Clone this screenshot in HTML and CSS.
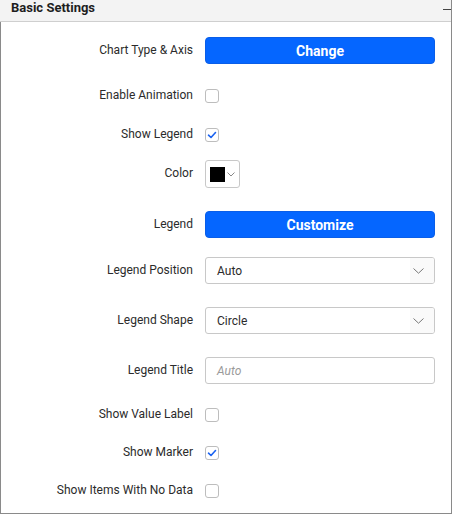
FILE: index.html
```html
<!DOCTYPE html>
<html>
<head>
<meta charset="utf-8">
<link rel="stylesheet" href="styles.css">
</head>
<body>
<div class="panel">
  <div class="header">
    <span class="title">Basic Settings</span>
    <span class="collapse"></span>
  </div>
  <div class="body">
    <div class="row r-btn1">
      <div class="label">Chart Type &amp; Axis</div>
      <div class="control"><button class="btn">Change</button></div>
    </div>
    <div class="row r-chk-a">
      <div class="label">Enable Animation</div>
      <div class="control"><span class="check"></span></div>
    </div>
    <div class="row r-chk">
      <div class="label">Show Legend</div>
      <div class="control"><span class="check on"><svg viewBox="0 0 14 14" width="14" height="14"><polyline points="3.5,7.2 6,9.5 10.5,4.5" fill="none" stroke="#1a62f0" stroke-width="1.6" stroke-linecap="round" stroke-linejoin="round"/></svg></span></div>
    </div>
    <div class="row r-color">
      <div class="label">Color</div>
      <div class="control">
        <div class="picker"><span class="swatch"></span><svg class="pchev" viewBox="0 0 8 5" width="8" height="5"><polyline points="0.5,0.5 4,4 7.5,0.5" fill="none" stroke="#888" stroke-width="1"/></svg></div>
      </div>
    </div>
    <div class="row r-btn2">
      <div class="label">Legend</div>
      <div class="control"><button class="btn">Customize</button></div>
    </div>
    <div class="row r-dd1">
      <div class="label">Legend Position</div>
      <div class="control"><div class="dropdown"><span class="val">Auto</span><span class="arrow"><svg viewBox="0 0 11 6" width="11" height="6"><polyline points="0.5,0.5 5.5,5.2 10.5,0.5" fill="none" stroke="#777" stroke-width="1"/></svg></span></div></div>
    </div>
    <div class="row r-dd">
      <div class="label">Legend Shape</div>
      <div class="control"><div class="dropdown"><span class="val">Circle</span><span class="arrow"><svg viewBox="0 0 11 6" width="11" height="6"><polyline points="0.5,0.5 5.5,5.2 10.5,0.5" fill="none" stroke="#777" stroke-width="1"/></svg></span></div></div>
    </div>
    <div class="row r-dd">
      <div class="label">Legend Title</div>
      <div class="control"><div class="textbox"><span class="ph">Auto</span></div></div>
    </div>
    <div class="row r-chk2">
      <div class="label">Show Value Label</div>
      <div class="control"><span class="check"></span></div>
    </div>
    <div class="row r-chk3">
      <div class="label">Show Marker</div>
      <div class="control"><span class="check on"><svg viewBox="0 0 14 14" width="14" height="14"><polyline points="3.5,7.2 6,9.5 10.5,4.5" fill="none" stroke="#1a62f0" stroke-width="1.6" stroke-linecap="round" stroke-linejoin="round"/></svg></span></div>
    </div>
    <div class="row r-chk3">
      <div class="label">Show Items With No Data</div>
      <div class="control"><span class="check"></span></div>
    </div>
  </div>
</div>
</body>
</html>
```
FILE: styles.css
```css
html, body {
  margin: 0;
  padding: 0;
  background: #ffffff;
}
.panel {
  width: 452px;
  height: 514px;
  box-sizing: border-box;
  border-right: 1px solid #8a8a8a;
  display: flex;
  flex-direction: column;
  font-family: Roboto, "Liberation Sans", sans-serif;
}
.header {
  height: 22px;
  box-sizing: border-box;
  background: #f3f3f3;
  border-bottom: 1px solid #cfcfcf;
  display: flex;
  align-items: flex-start;
  justify-content: space-between;
  padding-left: 11px;
}
.title {
  font-size: 13px;
  font-weight: bold;
  color: #1e1e1e;
  line-height: 16px;
}
.collapse {
  width: 8px;
  height: 1px;
  background: #444;
  margin-top: 9px;
}
.body {
  flex: 1;
  border-left: 1px solid #8a8a8a;
  border-bottom: 1px solid #8a8a8a;
  display: flex;
  flex-direction: column;
  padding-top: 15px;
}
.row {
  display: grid;
  grid-template-columns: 192px 230px;
  column-gap: 12px;
  align-items: center;
}
.r-btn1 { height: 27px; }
.r-chk-a { margin-top: 24px; height: 16px; }
.r-chk { margin-top: 23px; height: 16px; }
.r-color { margin-top: 17px; height: 28px; }
.r-btn2 { margin-top: 23px; height: 27px; }
.r-dd1 { margin-top: 19px; height: 27px; }
.r-dd { margin-top: 23px; height: 27px; }
.r-chk2 { margin-top: 23px; height: 16px; }
.r-chk3 { margin-top: 22px; height: 16px; }
.label {
  text-align: right;
  font-size: 12px;
  color: #2b2b2b;
  line-height: 14px;
  margin-top: -2px;
}
.control {
  display: flex;
  align-items: center;
}
.btn {
  width: 230px;
  height: 27px;
  margin: 0;
  padding: 0;
  border: 1px solid #0a5ee8;
  border-radius: 4px;
  background: #0566ff;
  color: #ffffff;
  font-family: Roboto, "Liberation Sans", sans-serif;
  font-size: 14px;
  font-weight: bold;
}
.check {
  width: 14px;
  height: 14px;
  box-sizing: border-box;
  border: 1px solid #bdbdbd;
  border-radius: 3px;
  background: #fff;
  display: flex;
  align-items: center;
  justify-content: center;
}
.check svg {
  display: block;
  margin: -1px;
}
.picker {
  width: 35px;
  height: 28px;
  box-sizing: border-box;
  border: 1px solid #c8c8c8;
  border-radius: 3px;
  display: flex;
  align-items: center;
  padding-left: 4px;
  gap: 2px;
}
.swatch {
  width: 15px;
  height: 15px;
  background: #000;
  display: block;
}
.pchev {
  display: block;
}
.dropdown, .textbox {
  width: 230px;
  height: 27px;
  box-sizing: border-box;
  border: 1px solid #c8c8c8;
  border-radius: 3px;
  display: flex;
  align-items: center;
  justify-content: space-between;
  padding-left: 11px;
  overflow: hidden;
}
.val {
  font-size: 12px;
  color: #2b2b2b;
}
.arrow {
  width: 24px;
  height: 25px;
  background: #fafafa;
  display: flex;
  align-items: center;
  justify-content: flex-start;
}
.arrow svg {
  display: block;
  margin-left: 3px;
}
.ph {
  font-size: 12px;
  font-style: italic;
  color: #9a9a9a;
}
```
